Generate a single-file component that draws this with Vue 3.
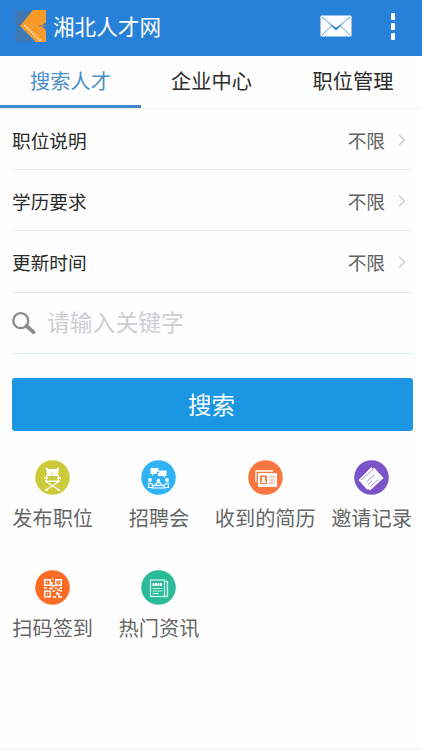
<script setup>
const tabs = ['搜索人才', '企业中心', '职位管理']
const filters = ['职位说明', '学历要求', '更新时间']
const entries = [
  { label: '发布职位', icon: 'chair', color: '#cbca3b' },
  { label: '招聘会', icon: 'fair', color: '#30b3f5' },
  { label: '收到的简历', icon: 'resume', color: '#fb763e' },
  { label: '邀请记录', icon: 'invite', color: '#7b55c7' },
  { label: '扫码签到', icon: 'qr', color: '#fc6c27' },
  { label: '热门资讯', icon: 'news', color: '#29ba98' },
]
</script>

<template>
  <div class="page">
    <header class="header">
      <svg class="logo" viewBox="0 0 32 33">
        <g stroke="#5d6f86" stroke-width="1.300" fill="none">
          <path d="M0 1L12 13M4 1L14 11M8 1L16 9M12 1L18 7M16 1L20 5M0 5L9 14M0 9L7 16M0 13L5 18M5 18L0 23M7 20L0 27M9 22L0 31M11 24L3 32M13 26L7 32M15 28L11 32M17 30L15 32" />
        </g>
        <path d="M18 0H31V12L27 15.500H24V16.500H27L31 20V32H21L5 16Z" fill="#f79a27" />
        <path d="M24 15.800H31" stroke="#a6865b" stroke-width="1.4" />
        <path d="M9 15L26 31" stroke="#f9d8a7" stroke-width="2.2" stroke-dasharray="2 1" />
      </svg>
      <h1 class="title">湘北人才网</h1>
      <svg class="mail" viewBox="0 0 32 22">
        <rect x=".5" y=".5" width="31" height="21" rx="1" fill="#fff" />
        <path d="M2 2L13 11.500L16 14L19 11.500L30 2M2 20L11.500 11M30 20L20.500 11" fill="none" stroke="#5a9ee2" stroke-width="1" />
        <path d="M9 8L16 12.800L23 8L19 12.800L16 15.500L13 12.800Z" fill="#2881d9" />
      </svg>
      <div class="more"><i></i><i></i><i></i></div>
    </header>

    <nav class="tabs">
      <a v-for="(tab, i) in tabs" :key="tab" class="tab" :class="{ active: i === 0 }"><span>{{ tab }}</span></a>
    </nav>

    <main class="form">
      <div v-for="name in filters" :key="name" class="row">
        <span class="name">{{ name }}</span>
        <span class="value">不限</span>
        <svg class="arrow" viewBox="0 0 8 12"><path d="M1 .8L6.500 6L1 11.200" fill="none" stroke="#c9c9cb" stroke-width="1.3" /></svg>
      </div>
      <div class="search">
        <svg class="glass" viewBox="0 0 24 23">
          <circle cx="8.800" cy="8.700" r="7.500" fill="none" stroke="#8c8c8c" stroke-width="2.300" />
          <path d="M14.500 14L21.500 20.200" stroke="#8c8c8c" stroke-width="3.800" stroke-linecap="round" />
        </svg>
        <span class="placeholder">请输入关键字</span>
      </div>
      <button class="submit"><span>搜索</span></button>
    </main>

    <section class="grid">
      <div v-for="e in entries" :key="e.label" class="entry">
        <svg class="badge" viewBox="0 0 35 35">
          <circle cx="17.500" cy="17.500" r="17.300" :fill="e.color" />
          <g v-if="e.icon === 'chair'" fill="none" stroke="#fff">
            <path d="M11 7L14 9H21L24 7L23 16H12Z" fill="#fff" stroke="none" />
            <path d="M11.500 15V21M23.500 15V21" stroke-width="1" />
            <path d="M9 18H13M22 18H26M10 21.200H25" stroke-width="1.400" />
            <path d="M11 30L24 21.500M24 30L11 21.500" stroke-width="1.300" />
            <path d="M9.500 30.300H13M22 30.300H25.500" stroke-width="1" />
            <path d="M16.500 13.500H18.500" stroke="#cbca3b" stroke-width="1.500" />
          </g>
          <g v-else-if="e.icon === 'fair'" fill="#fff">
            <path d="M9.500 8H17.500V12H16V14H13L11 16V14H9.500Z" />
            <path d="M18 10.500H25.500V16H24V18L22 16H17V13H18Z" />
            <circle cx="9" cy="20" r="1.900" /><circle cx="26" cy="20" r="1.900" /><circle cx="17.500" cy="20.500" r="1.700" />
            <path d="M8 22.500L7.500 27.500H12M27 22.500L27.500 27.500H23M9 23L12 25M26 23L23 25M14.500 25L16 22.700H19L20.500 25M12.500 25.300H22.500L24 28H11Z" fill="none" stroke="#fff" stroke-width="1.200" />
          </g>
          <g v-else-if="e.icon === 'resume'">
            <path d="M8 22V11H25" fill="none" stroke="#fff" stroke-width="1.300" />
            <rect x="10" y="13" width="19" height="14" rx=".7" fill="#fff" />
            <rect x="12" y="15.500" width="7" height="8.500" fill="#fb763e" />
            <path d="M14 17H17V20L18 23H13L14 20Z" fill="#fff" />
            <path d="M21 17H27M21 20H27M21 23H27" stroke="#fb9b72" stroke-width="1" />
          </g>
          <g v-else-if="e.icon === 'invite'">
            <path d="M4.500 20L17.500 7L18.500 8.500L20.500 8L29.500 18L16 30.500L14.500 29L13 29.500Z" fill="#fff" />
            <path d="M7 20L19 9.500M13 21.500L20 15M14 24.500L18 21M16 27L24 19.500" fill="none" stroke="#9d82d5" stroke-width=".9" />
          </g>
          <g v-else-if="e.icon === 'qr'" fill="none" stroke="#fff" stroke-width="1.500">
            <path d="M9.700 9.700H15.300V15.300H9.700ZM20.700 9.700H26.300V15.300H20.700ZM9.700 21.200H15.300V26.800H9.700Z" />
            <path d="M12 12.500H13M23 12.500H24M12 24H13M17 9H18.500M17 12V16H20M9 18H12M14 18.500H18M20 18H22M24.500 18H27M22 20H25M17.500 21H20M18 27H21M22 22V24H24V27H27M26 20V22" />
          </g>
          <g v-else>
            <rect x="9.500" y="10" width="14" height="16.500" fill="none" stroke="#c9f3e8" stroke-width="1.300" />
            <path d="M23.500 11.500H26.500V26.500H22" fill="none" stroke="#c9f3e8" stroke-width="1.400" />
            <path d="M11.500 14.500H21.500" stroke="#fff" stroke-width="3" stroke-dasharray="2 .5" />
            <path d="M11.500 18.500H21.500M11.500 21H21.500M11.500 23.500H18" stroke="#c9f3e8" stroke-width="1" />
          </g>
        </svg>
        <span class="caption">{{ e.label }}</span>
      </div>
    </section>
  </div>
</template>

<style>
body { margin: 0; background: #fefefe; }
</style>

<style scoped>
.page {
  width: 422px; height: 750px; box-sizing: border-box; overflow: hidden;
  background: #fefefe; border-bottom: 2px solid #f5f5f5;
  font-family: "Noto Sans CJK SC", sans-serif; color: #2b2b2b;
}
.header { height: 56px; box-sizing: border-box; background: #2881d9; display: flex; align-items: center; padding: 0 27px 4px 15px; }
.logo { width: 32px; height: 33px; }
.title { margin: 0 0 0 6px; font-size: 21.600px; line-height: 32px; font-weight: 400; color: #fff; flex: 1; }
.mail { width: 32px; height: 22px; }
.more { display: flex; flex-direction: column; gap: 3px; margin-left: 39px; }
.more i { width: 4px; height: 7px; background: #fff; border-radius: 1px; }
.tabs { display: grid; grid-template-columns: 141px 141px 142px; height: 53px; box-sizing: border-box; border-bottom: 1px solid #eee; }
.tab { display: flex; align-items: center; justify-content: center; font-size: 20.200px; height: 52px; box-sizing: border-box; border-bottom: 3px solid transparent; }
.tab.active { color: #4a8ecb; border-bottom-color: #4187cb; }
.form { padding: 0 9px 0 12px; }
.row { height: 61.200px; box-sizing: border-box; border-bottom: 1px solid #e9e9e9; display: flex; align-items: center; font-size: 18.700px; padding-right: 7px; }
.name { flex: 1; }
.value { color: #606060; }
.arrow { width: 8px; height: 12px; margin: 2px 0 0 13px; }
.search { height: 61px; box-sizing: border-box; border-bottom: 1px solid #d8e6f7; display: flex; align-items: center; }
.glass { width: 24px; height: 23px; margin-top: 1px; }
.placeholder { margin: -1px 0 0 11px; font-size: 22.800px; line-height: 32px; color: #cdcdd2; font-weight: 400; }
.submit { display: flex; align-items: center; justify-content: center; width: 401px; height: 53px; margin-top: 24px; border: 0; border-radius: 3px; background: #1a96e2; color: #fff; font: 23.500px "Noto Sans CJK SC", sans-serif; padding: 0 2px 0 0; }
.grid { display: grid; grid-template-columns: repeat(4, 106.300px); grid-auto-rows: 110px; margin: 29.500px 0 0 -.5px; }
.entry { display: flex; flex-direction: column; align-items: center; }
.badge { width: 35px; height: 35px; }
.caption { margin-top: 7.500px; font-size: 20.200px; line-height: 30px; color: #666; font-weight: 400; white-space: nowrap; }
</style>
